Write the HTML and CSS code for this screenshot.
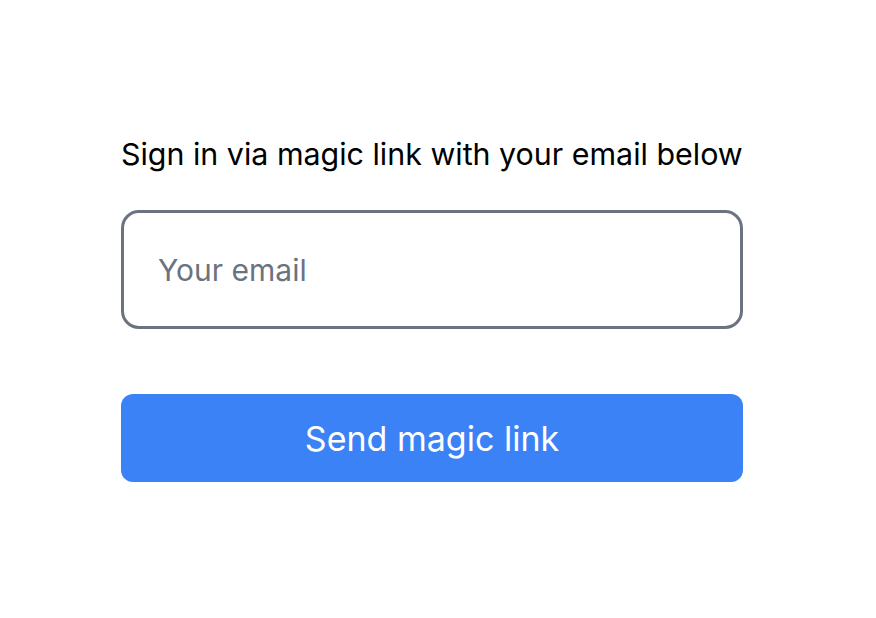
FILE: index.html
```html
<!DOCTYPE html>
<html lang="en">
<head>
  <meta charset="UTF-8">
  <title>Sign in</title>
  <link rel="stylesheet" href="styles.css">
</head>
<body>

  <form class="login" id="loginForm">
    <p class="login-desc">Sign in via magic link with your email below</p>
    <input class="login-input" type="email" placeholder="Your email">
    <button class="login-btn" type="submit">Send magic link</button>
  </form>

</body>
</html>
```
FILE: styles.css
```css
body {
  margin: 0;
  font-family: "Inter", "Liberation Sans", sans-serif;
  background: #fff;
}
.login {
  width: 622px;
  margin-left: 121px;
  padding-top: 132px;
  display: flex;
  flex-direction: column;
}
.login-desc {
  margin: 0;
  font-size: 30.4px;
  line-height: 44px;
  color: #000;
  white-space: nowrap;
}
.login-input {
  box-sizing: border-box;
  margin-top: 34px;
  height: 119px;
  padding: 0 34px;
  border: 3px solid #6b7280;
  border-radius: 18px;
  font-family: inherit;
  font-size: 30px;
  color: #111;
  outline: none;
}
.login-input::placeholder {
  color: #6b7280;
}
.login-btn {
  margin-top: 65px;
  height: 88px;
  border: none;
  border-radius: 12px;
  background: #3b82f6;
  color: #fff;
  font-family: inherit;
  font-size: 34px;
  cursor: pointer;
}
```
